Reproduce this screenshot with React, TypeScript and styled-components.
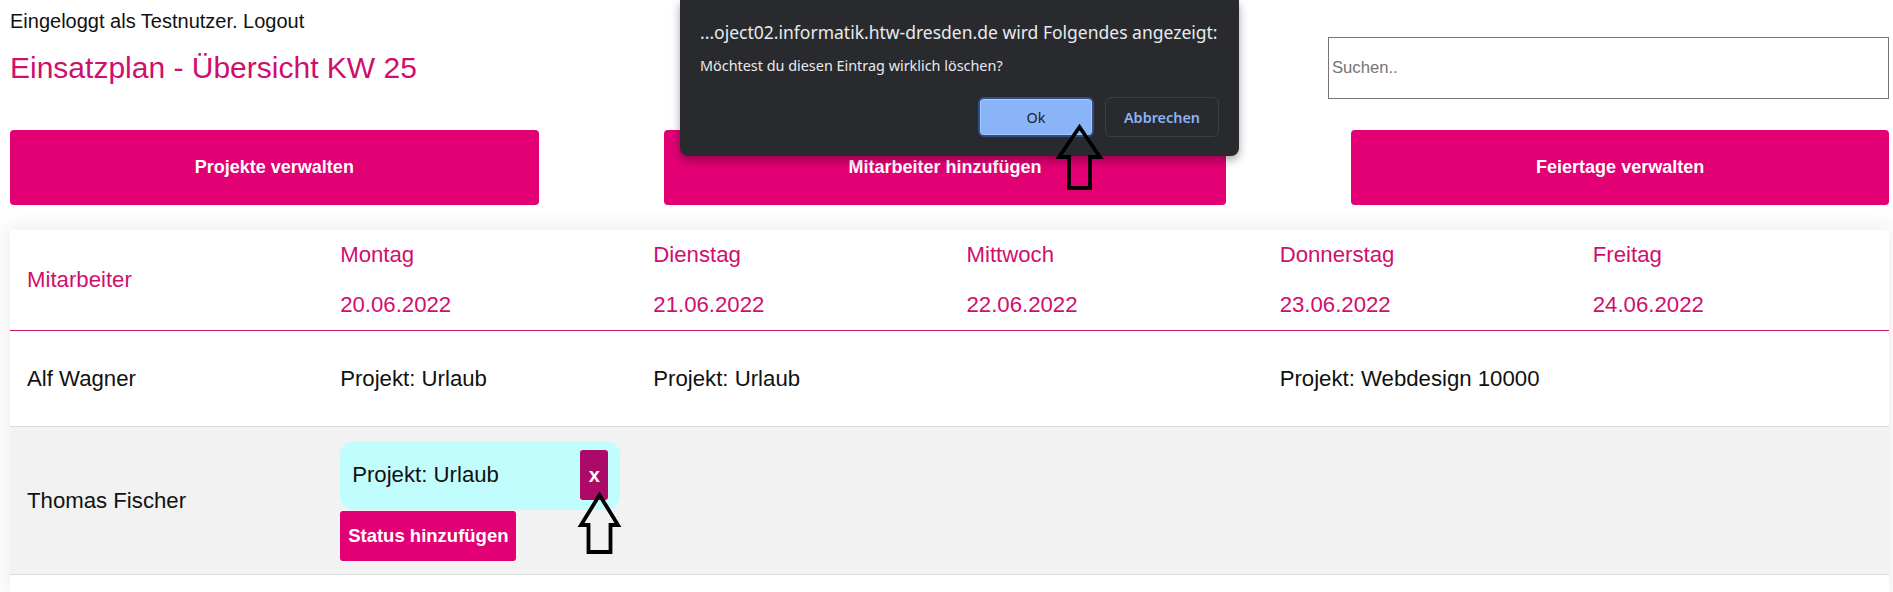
import React from 'react';
import styled, { createGlobalStyle } from 'styled-components';

const magenta = '#e20074';
const textMagenta = '#cf0f6e';

const GlobalStyle = createGlobalStyle`
  html, body {
    margin: 0;
    padding: 0;
    overflow: hidden;
    background: #fff;
  }
  body {
    font-family: "Liberation Sans", Arial, sans-serif;
    color: #111;
  }
`;

const Page = styled.div`
  position: relative;
  box-sizing: border-box;
  display: flex;
  flex-direction: column;
  height: 592px;
  padding: 10px 4px 0 10px;
`;

const Header = styled.header`
  display: flex;
  justify-content: space-between;
  align-items: flex-start;
`;

const UserLine = styled.div`
  font-size: 20px;
  line-height: 23px;
`;

const Title = styled.h2`
  margin: 18px 0 0 0;
  font-size: 30px;
  font-weight: normal;
  line-height: 34px;
  color: ${textMagenta};
`;

const SearchInput = styled.input`
  box-sizing: border-box;
  width: 561px;
  height: 62px;
  margin-top: 27px;
  padding: 0 3px;
  border: 1px solid #767676;
  font-family: "Liberation Sans", Arial, sans-serif;
  font-size: 16.67px;
  outline: none;
  &::placeholder {
    color: #757575;
  }
`;

const ActionBar = styled.div`
  display: flex;
  gap: 125px;
  margin-top: 31px;
`;

const ActionButton = styled.button`
  flex: 1 1 auto;
  height: 75px;
  padding: 0 20px;
  border: none;
  border-radius: 4px;
  background: ${magenta};
  color: #fff;
  font-family: "Liberation Sans", Arial, sans-serif;
  font-size: 18px;
  font-weight: bold;
`;

const Card = styled.div`
  flex: 1;
  margin-top: 25px;
  background: #fff;
  box-shadow: 0 0 22px 4px rgba(0, 0, 0, 0.07);
`;

const Plan = styled.table`
  width: 100%;
  table-layout: fixed;
  border-collapse: collapse;
  font-size: 22.2px;
`;

const HeadCell = styled.th`
  padding: 0 17px;
  text-align: left;
  font-weight: normal;
  color: ${textMagenta};
  vertical-align: middle;
  border-bottom: 1.5px solid #c3166c;
`;

const DayLine = styled.div`
  line-height: 50px;
  white-space: nowrap;
`;

const Row = styled.tr<{ $shaded?: boolean }>`
  background: ${(p) => (p.$shaded ? '#f2f2f2' : '#fff')};
  border-bottom: 1px solid #dcdcdc;
`;

const Cell = styled.td`
  height: 68px;
  padding: 14px 16px 13px 17px;
  vertical-align: middle;
  white-space: nowrap;
`;

const EntryBox = styled.div`
  display: flex;
  align-items: center;
  justify-content: space-between;
  padding: 9px 12px 10px 12px;
  border-radius: 14px;
  background: #c2fdfd;
`;

const RemoveButton = styled.button`
  width: 28px;
  height: 50px;
  padding: 0;
  border: none;
  border-radius: 3px;
  background: #ab0a69;
  color: #fff;
  font-family: "Liberation Sans", Arial, sans-serif;
  font-size: 20px;
  font-weight: bold;
`;

const StatusButton = styled.button`
  display: block;
  height: 50px;
  margin-top: 1px;
  padding: 0 8px;
  border: none;
  border-radius: 3px;
  background: ${magenta};
  color: #fff;
  font-family: "Liberation Sans", Arial, sans-serif;
  font-size: 18.5px;
  font-weight: bold;
`;

const Dialog = styled.div`
  position: absolute;
  left: 680px;
  top: 0;
  box-sizing: border-box;
  width: 559px;
  height: 156px;
  padding: 21px 20px 0 20px;
  background: #292a2d;
  border-radius: 0 0 8px 8px;
  box-shadow: 0 4px 10px rgba(0, 0, 0, 0.35);
  font-family: "Noto Sans", "Open Sans", sans-serif;
  color: #e8eaed;
`;

const DialogTitle = styled.div`
  font-size: 17.5px;
  line-height: 22px;
  white-space: nowrap;
`;

const DialogText = styled.div`
  margin-top: 12px;
  font-size: 14.4px;
  line-height: 22px;
`;

const DialogActions = styled.div`
  display: flex;
  justify-content: flex-end;
  gap: 11px;
  margin-top: 20px;
`;

const DialogButton = styled.button<{ $primary?: boolean }>`
  box-sizing: border-box;
  width: ${(p) => (p.$primary ? '116px' : '114px')};
  height: 40px;
  border-radius: 6px;
  font-family: "Noto Sans", "Open Sans", sans-serif;
  font-size: 14.4px;
  background: ${(p) => (p.$primary ? '#8ab4f8' : 'transparent')};
  color: ${(p) => (p.$primary ? '#202124' : '#8ab4f8')};
  font-weight: ${(p) => (p.$primary ? 'normal' : 600)};
  border: ${(p) => (p.$primary ? '2px solid #2d4f86' : '1px solid #3c4043')};
  box-shadow: ${(p) => (p.$primary ? 'inset 0 0 0 1px #a8c7fa' : 'none')};
`;

const ArrowMark = styled.svg<{ $x: number; $y: number }>`
  position: absolute;
  left: ${(p) => p.$x}px;
  top: ${(p) => p.$y}px;
  overflow: visible;
`;

const days = [
  { name: 'Montag', date: '20.06.2022' },
  { name: 'Dienstag', date: '21.06.2022' },
  { name: 'Mittwoch', date: '22.06.2022' },
  { name: 'Donnerstag', date: '23.06.2022' },
  { name: 'Freitag', date: '24.06.2022' },
];

const alf = ['Projekt: Urlaub', 'Projekt: Urlaub', '', 'Projekt: Webdesign 10000', ''];

const Arrow = ({ x, y, w, h, shaft }: { x: number; y: number; w: number; h: number; shaft: number }) => {
  const mid = w / 2;
  const head = 30;
  const pts = [
    [mid, 2],
    [w - 2, head + 2],
    [mid + shaft / 2, head + 2],
    [mid + shaft / 2, h - 2],
    [mid - shaft / 2, h - 2],
    [mid - shaft / 2, head + 2],
    [2, head + 2],
  ]
    .map((p) => p.join(','))
    .join(' ');
  return (
    <ArrowMark $x={x} $y={y} width={w} height={h} viewBox={`0 0 ${w} ${h}`}>
      <polygon points={pts} fill="none" stroke="#000" strokeWidth={3.8} strokeLinejoin="miter" />
    </ArrowMark>
  );
};

export default function App() {
  return (
    <Page>
      <GlobalStyle />
      <Header>
        <div>
          <UserLine>Eingeloggt als Testnutzer. Logout</UserLine>
          <Title>Einsatzplan - Übersicht KW 25</Title>
        </div>
        <SearchInput placeholder="Suchen.." />
      </Header>

      <ActionBar>
        <ActionButton>Projekte verwalten</ActionButton>
        <ActionButton>Mitarbeiter hinzufügen</ActionButton>
        <ActionButton>Feiertage verwalten</ActionButton>
      </ActionBar>

      <Card>
        <Plan>
          <thead>
            <tr>
              <HeadCell>Mitarbeiter</HeadCell>
              {days.map((d) => (
                <HeadCell key={d.name}>
                  <DayLine>{d.name}</DayLine>
                  <DayLine>{d.date}</DayLine>
                </HeadCell>
              ))}
            </tr>
          </thead>
          <tbody>
            <Row>
              <Cell>Alf Wagner</Cell>
              {alf.map((a, i) => (
                <Cell key={i}>{a}</Cell>
              ))}
            </Row>
            <Row $shaded>
              <Cell>Thomas Fischer</Cell>
              <Cell>
                <EntryBox>
                  <span>Projekt: Urlaub</span>
                  <RemoveButton>x</RemoveButton>
                </EntryBox>
                <StatusButton>Status hinzufügen</StatusButton>
              </Cell>
              <Cell />
              <Cell />
              <Cell />
              <Cell />
            </Row>
          </tbody>
        </Plan>
      </Card>

      <Dialog>
        <DialogTitle>...oject02.informatik.htw-dresden.de wird Folgendes angezeigt:</DialogTitle>
        <DialogText>Möchtest du diesen Eintrag wirklich löschen?</DialogText>
        <DialogActions>
          <DialogButton $primary>Ok</DialogButton>
          <DialogButton>Abbrechen</DialogButton>
        </DialogActions>
      </Dialog>

      <Arrow x={1057} y={125} w={45} h={65} shaft={21} />
      <Arrow x={579} y={493} w={41} h={61} shaft={22} />
    </Page>
  );
}
